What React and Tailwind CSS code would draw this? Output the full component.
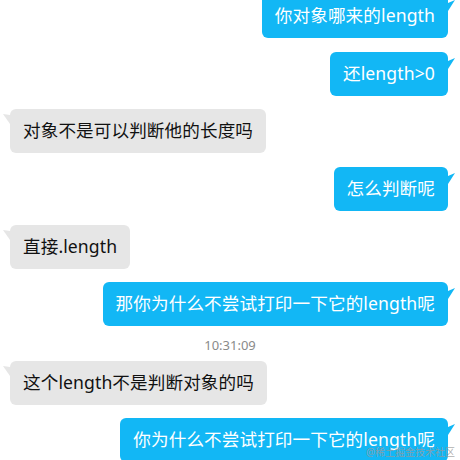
import React from "react";

function RightTail() {
  return (
    <svg className="absolute left-full top-[6px]" width="8" height="12" viewBox="0 0 8 12">
      <polygon points="0,3 7,0 0,11" fill="#12b7f5" />
    </svg>
  );
}

function LeftTail() {
  return (
    <svg className="absolute right-full top-[5px]" width="8" height="12" viewBox="0 0 8 12">
      <polygon points="1,0 8,1 8,10" fill="#e6e6e6" />
    </svg>
  );
}

function Me({ children, className = "" }) {
  return (
    <div className={"flex justify-end pr-[12px] " + className}>
      <div className="relative h-[44px] flex items-center px-[13px] rounded-[6px] bg-[#12b7f5] text-white text-[17.6px] tracking-[0.1px] whitespace-nowrap">
        {children}
        <RightTail />
      </div>
    </div>
  );
}

function Them({ children, className = "" }) {
  return (
    <div className={"flex justify-start pl-[10px] " + className}>
      <div className="relative h-[44px] flex items-center px-[13px] rounded-[6px] bg-[#e6e6e6] text-[#111] text-[17.6px] tracking-[0.1px] whitespace-nowrap">
        {children}
        <LeftTail />
      </div>
    </div>
  );
}

export default function App() {
  return (
    <div className="relative w-[460px] h-[460px] overflow-hidden bg-white font-['Noto_Sans','Noto_Sans_CJK_SC',sans-serif] leading-none">
      <div className="flex flex-col -mt-[6px]">
        <Me>你对象哪来的length</Me>
        <Me className="mt-[14px]">还length&gt;0</Me>
        <Them className="mt-[13px]">对象不是可以判断他的长度吗</Them>
        <Me className="mt-[14px]">怎么判断呢</Me>
        <Them className="mt-[14px]">直接.length</Them>
        <Me className="mt-[13px]">那你为什么不尝试打印一下它的length呢</Me>
        <div className="mt-[9px] h-[20px] flex items-center justify-center text-[13px] text-[#8a8a8a]">
          10:31:09
        </div>
        <Them className="mt-[6px]">这个length不是判断对象的吗</Them>
        <Me className="mt-[13px]">你为什么不尝试打印一下它的length呢</Me>
      </div>
      <div className="absolute right-[5px] bottom-[3px] text-[10px] text-[#9a9a9a]/80 leading-none">
        @稀土掘金技术社区
      </div>
    </div>
  );
}
